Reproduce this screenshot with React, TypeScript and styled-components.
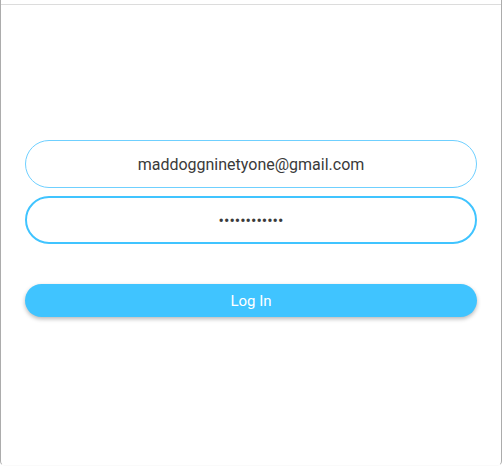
import React from "react";
import styled, { createGlobalStyle } from "styled-components";

const Global = createGlobalStyle`
  html, body { margin: 0; padding: 0; background: #ffffff; }
  body { font-family: Roboto, "Noto Sans", sans-serif; }
  * { box-sizing: border-box; }
`;

const Frame = styled.div`
  width: 502px;
  height: 466px;
  border-left: 1px solid #acacac;
  border-right: 1px solid #acacac;
  border-bottom: 1px solid #fafafa;
  border-radius: 0 0 5px 5px;
  display: flex;
  flex-direction: column;
  background: #ffffff;
  overflow: hidden;
`;

const TopStrip = styled.div`
  height: 5px;
  flex: none;
  border-bottom: 1px solid #dcdcdc;
`;

const Form = styled.form`
  display: flex;
  flex-direction: column;
  padding: 135px 24px 0;
`;

const Field = styled.input<{ $focused?: boolean }>`
  height: 48px;
  width: 100%;
  border-radius: 24px;
  border: ${(p) => (p.$focused ? "2px solid #40c4ff" : "1px solid #6fd0ff")};
  background: #ffffff;
  text-align: center;
  font-family: Roboto, "Noto Sans", sans-serif;
  font-size: 16px;
  color: #3a3a3a;
  outline: none;
  padding: 0 16px;
  margin: 0;
  & + & {
    margin-top: 8px;
  }
`;

const LoginButton = styled.button`
  margin-top: 40px;
  height: 33px;
  width: 100%;
  border: none;
  border-radius: 17px;
  background: #40c4ff;
  color: #ffffff;
  font-family: Roboto, "Noto Sans", sans-serif;
  font-size: 15px;
  font-weight: 400;
  box-shadow: 0 2px 4px rgba(0, 0, 0, 0.28);
  cursor: pointer;
`;

export default function App() {
  return (
    <>
      <Global />
      <Frame>
        <TopStrip />
        <Form onSubmit={(e) => e.preventDefault()}>
          <Field type="email" readOnly value="maddoggninetyone@gmail.com" />
          <Field type="password" readOnly value="123456789012" $focused />
          <LoginButton type="submit">Log In</LoginButton>
        </Form>
      </Frame>
    </>
  );
}
